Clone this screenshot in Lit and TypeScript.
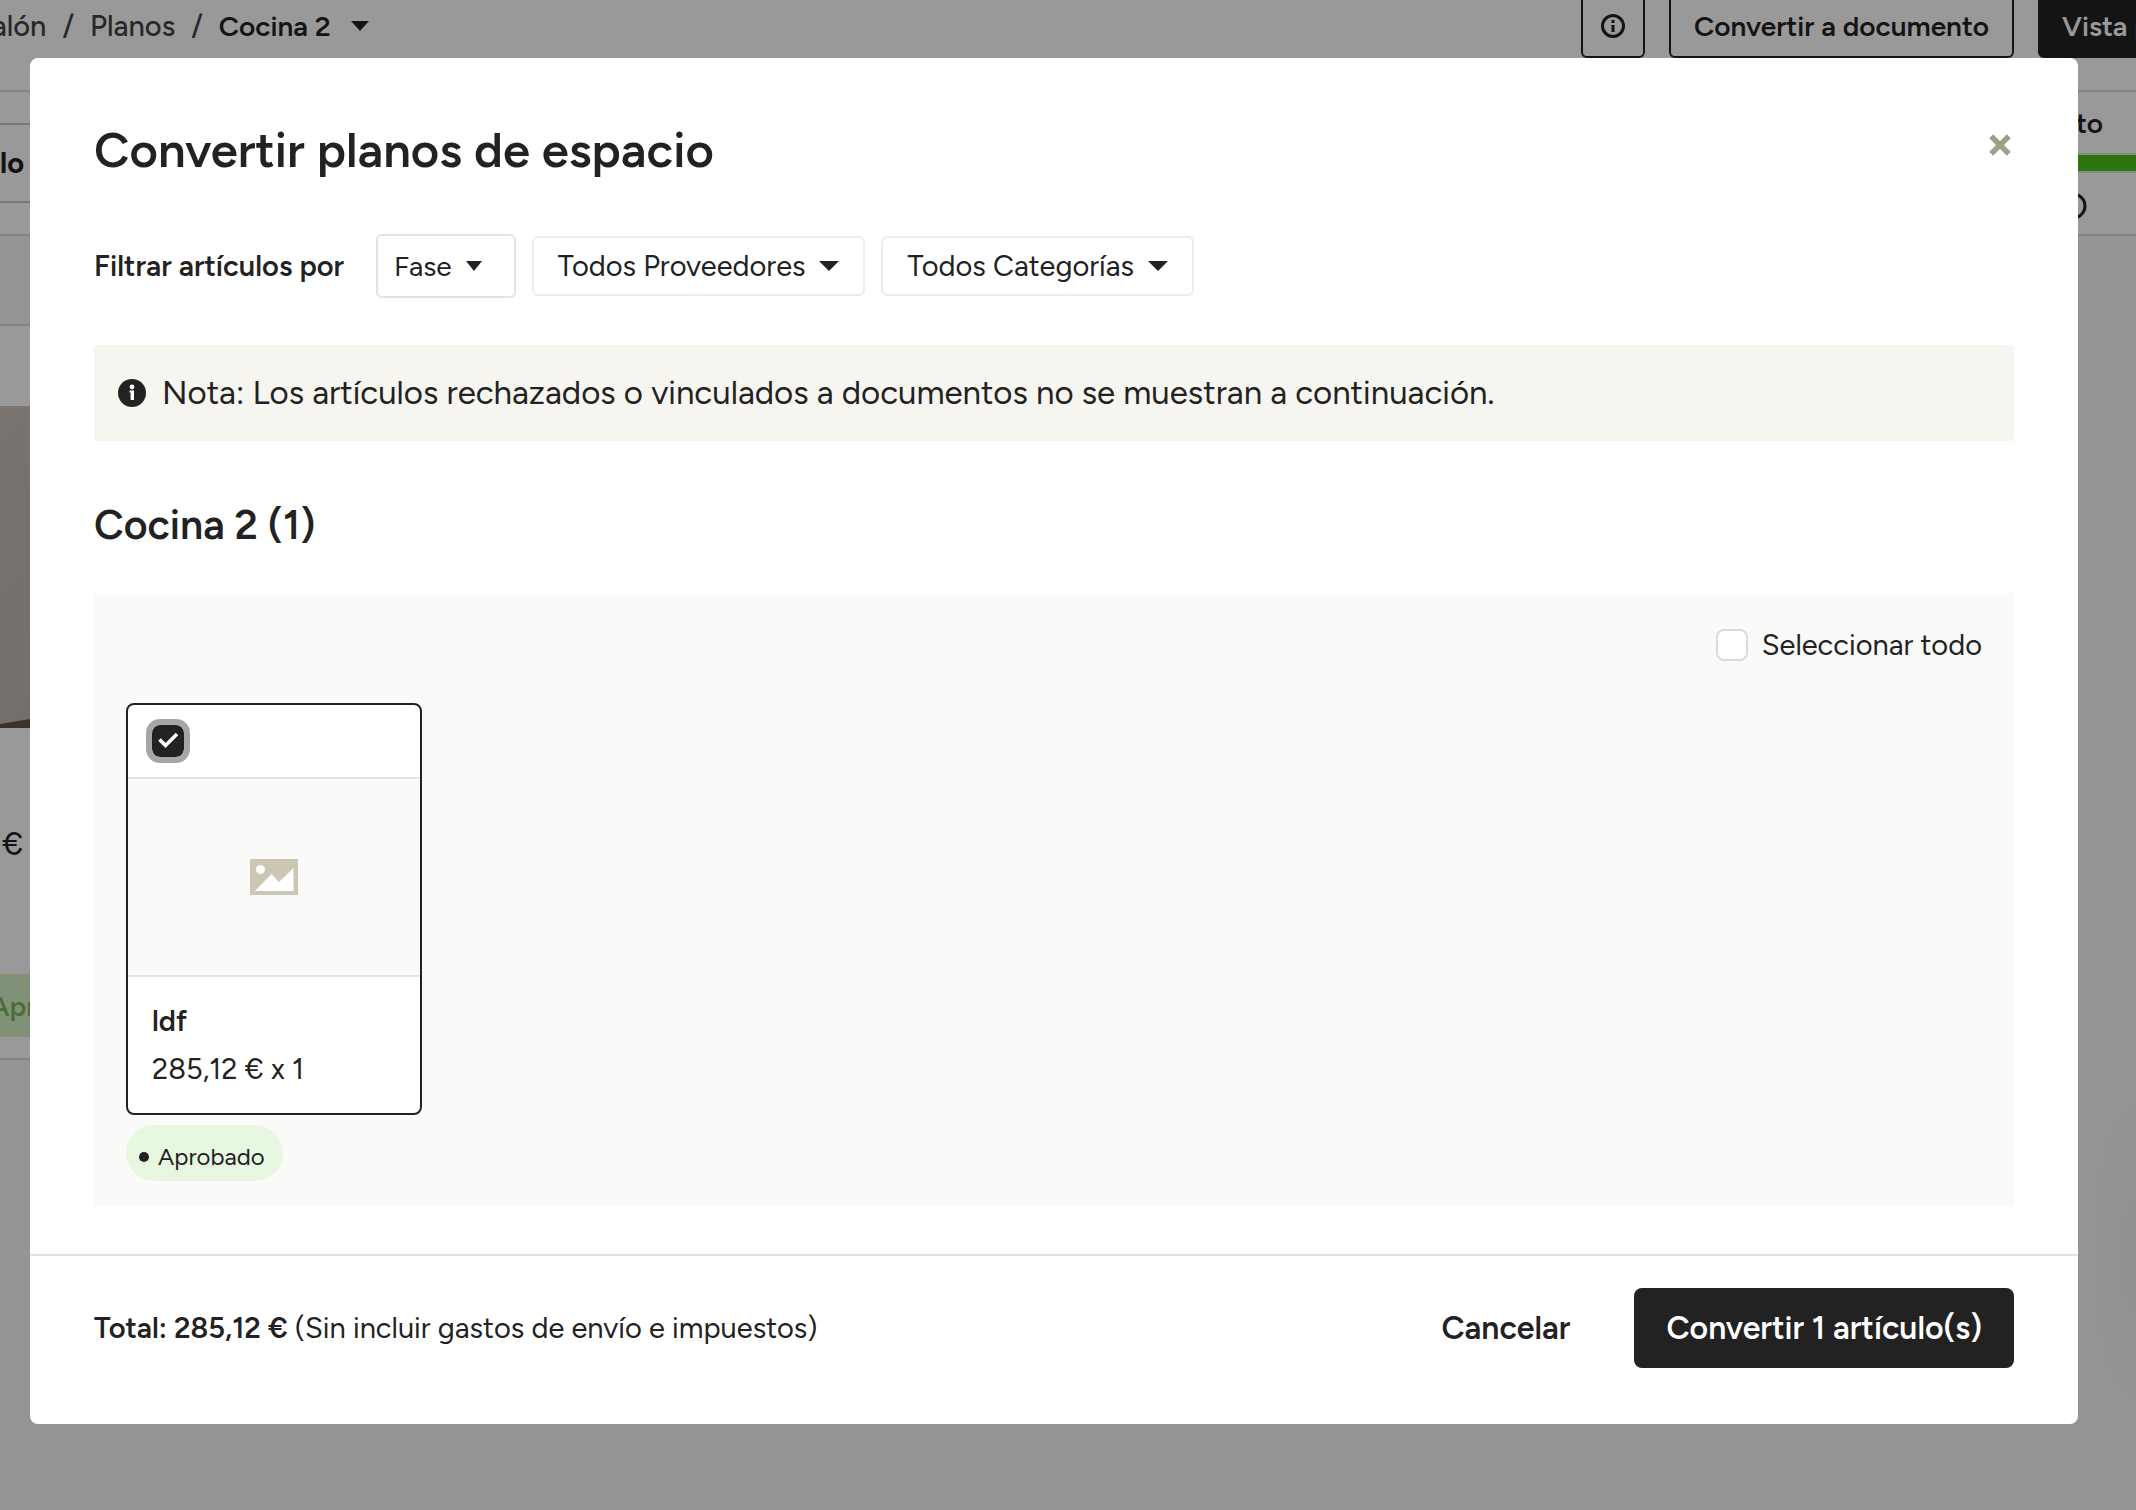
import { LitElement, html, css } from "lit";
import { customElement, state } from "lit/decorators.js";

const caret = html`<svg class="caret" viewBox="0 0 20 10" preserveAspectRatio="none" aria-hidden="true"><path d="M0 0H20L10 10Z" fill="currentColor"></path></svg>`;

@customElement("plan-page")
export class PlanPage extends LitElement {
  static styles = css`
    :host { display: block; background: radial-gradient(ellipse 60px 200px at 100% 83%, #f2f2ef, #f9f9f6); min-height: 100vh; color: #222; font-size: 28px; line-height: 36px; overflow: hidden; }
    button { font: inherit; }
    .top { background: #fff; height: 90px; border-bottom: 2px solid #ddddd8; display: flex; justify-content: space-between; align-items: flex-start; overflow: hidden; }
    .crumbs { display: flex; gap: 16px; margin: 8px 0 0 -26px; color: #444; font-size: 29px; font-weight: 500; }
    .crumbs a { color: inherit; text-decoration: none; }
    .crumbs .here { color: #222; font-size: 28px; font-weight: 600; display: flex; gap: 20px; align-items: center; background: none; border: 0; padding: 0; }
    .caret { width: 18px; height: 10px; flex: none; }
    .acts { display: flex; gap: 24px; margin: -6px -140px 0 0; flex: none; }
    .acts button { box-sizing: border-box; height: 64px; border: 2px solid #222; border-radius: 6px; background: #fff; color: #222; font-weight: 600; padding: 0 22px; display: flex; align-items: center; justify-content: center; white-space: nowrap; }
    .acts .info { width: 64px; padding: 0; }
    .acts .doc { width: 345px; }
    .acts .dark { width: 238px; background: #222; color: #fff; justify-content: flex-start; }
    .info svg { width: 26px; height: 26px; }
    .bar { background: #fff; height: 142px; border-bottom: 2px solid #ddddd8; display: flex; justify-content: space-between; }
    .state { margin-top: 31px; height: 76px; width: 60px; border: 2px solid #cbcac2; border-left: 0; font-weight: 700; font-size: 29px; display: flex; align-items: center; }
    .budget { width: 200px; margin-top: 13px; display: flex; flex-direction: column; font-weight: 600; }
    .budget .name { text-align: right; padding-right: 33px; }
    .meter { height: 16px; margin-top: 12px; background: #4bc21a; border: 2px solid #d9f2cd; border-width: 2px 0; }
    .budget svg { width: 28px; height: 28px; margin: 19px 0 0 123px; }
    .item { margin-top: 88px; width: 200px; background: #fff; border: 2px solid #ddddd8; border-left: 0; height: 732px; display: flex; flex-direction: column; }
    .photo { margin-top: 80px; height: 322px; background: linear-gradient(150deg, #cbc1bb, #bcb8b1); display: flex; align-items: flex-end; }
    .photo svg { width: 200px; height: 40px; }
    .price { margin: 98px 0 0 2px; font-size: 32px; }
    .ok { margin-top: 112px; height: 63px; background: #d8f2c8; color: #7db860; font-weight: 600; display: flex; align-items: center; }
    .ok span { margin-left: -10px; }
  `;
  render() {
    return html`
      <header class="top">
        <nav class="crumbs" aria-label="Ruta">
          <a href="#">Salón</a><span>/</span><a href="#">Planos</a><span>/</span>
          <button class="here">Cocina 2 ${caret}</button>
        </nav>
        <div class="acts">
          <button class="info" aria-label="Información">
            <svg viewBox="0 0 26 26" fill="none" stroke="currentColor" stroke-width="3"><circle cx="13" cy="13" r="10.5"></circle><path d="M13 12V19M13 7V10"></path></svg>
          </button>
          <button class="doc">Convertir a documento</button>
          <button class="dark">Vista previa</button>
        </div>
      </header>
      <section class="bar">
        <div class="state"><span>lo</span></div>
        <div class="budget">
          <span class="name">Presupuesto</span>
          <div class="meter"></div>
          <svg viewBox="0 0 28 28" fill="none" stroke="currentColor" stroke-width="3"><circle cx="14" cy="14" r="12"></circle></svg>
        </div>
      </section>
      <article class="item">
        <div class="photo">
          <svg viewBox="0 0 200 40" aria-hidden="true"><path d="M0 36L30 31L200 4V40H0Z" fill="#62564c"></path></svg>
        </div>
        <span class="price">€</span>
        <div class="ok"><span>Aprobado</span></div>
      </article>
    `;
  }
}

@customElement("convert-dialog")
export class ConvertDialog extends LitElement {
  @state() private picked = true;
  @state() private all = false;

  static styles = css`
    :host { display: block; color: #222; font-size: 29px; line-height: 36px; }
    * { box-sizing: border-box; }
    button, input { font: inherit; color: inherit; margin: 0; }
    h2, h3, p { margin: 0; }
    .dialog { background: #fff; border-radius: 8px; overflow: hidden; }
    .body { padding: 64px 64px 48px; }
    .head { display: flex; justify-content: space-between; align-items: flex-start; }
    .head h2 { font-size: 49px; line-height: 56px; font-weight: 600; }
    .close { border: 0; background: none; padding: 0; width: 28px; height: 28px; margin-top: 9px; color: #a09f8c; display: grid; place-items: center; }
    .close svg { width: 22px; height: 22px; }
    .filters { display: flex; align-items: center; gap: 16px; margin-top: 56px; }
    .filters .lead { font-weight: 600; width: 266px; white-space: nowrap; }
    .filters button { background: #fff; border: 2px solid #ececea; border-radius: 6px; height: 60px; padding: 0 24px; display: flex; align-items: center; gap: 14px; white-space: nowrap; }
    .filters .phase { height: 64px; font-size: 28px; border-color: #e4e3dd; padding: 0 32px 0 16px; }
    .caret { width: 20px; height: 10px; flex: none; }
    .phase .caret { width: 16px; }
    .note { margin-top: 47px; height: 96px; background: #f6f5f0; border-radius: 4px; display: flex; align-items: center; gap: 16px; padding: 0 24px; font-size: 33px; line-height: 40px; white-space: nowrap; }
    .note svg { width: 28px; height: 28px; flex: none; }
    .body h3 { font-size: 41px; line-height: 48px; font-weight: 600; margin-top: 60px; }
    .panel { margin-top: 44px; background: #fafaf8; padding: 32px 32px 25px; }
    .all { display: flex; justify-content: flex-end; align-items: center; gap: 14px; height: 40px; }
    .tick { appearance: none; width: 32px; height: 32px; border: 2px solid #dbdbd8; border-radius: 8px; background: #fff; flex: none; }
    .tick:checked { background: #222; border-color: #222; }
    .ring { outline: 6px solid #a6a6a2; }
    .mark { position: relative; display: grid; width: 32px; height: 32px; }
    .mark svg { position: absolute; inset: 0; pointer-events: none; }
    .card { margin-top: 38px; width: 296px; border: 2px solid #222; border-radius: 8px; background: #fff; overflow: hidden; }
    .pick { height: 74px; padding: 20px 24px; border-bottom: 2px solid #e3e3e0; }
    .thumb { height: 198px; background: #fafaf8; border-bottom: 2px solid #e3e3e0; display: grid; place-items: center; }
    .thumb svg { width: 48px; height: 36px; }
    .text { padding: 20px 24px; height: 136px; line-height: 48px; }
    .text strong { display: block; font-weight: 600; }
    .tag { display: inline-flex; align-items: center; gap: 9px; margin-top: 10px; height: 56px; padding: 8px 18px 0 13px; border-radius: 28px; background: #e8f8e0; font-size: 24px; line-height: 32px; }
    .tag i { width: 10px; height: 10px; border-radius: 50%; background: #222; }
    .foot { border-top: 2px solid #e3e3de; padding: 32px 64px 56px; display: flex; align-items: center; }
    .foot p { flex: 1; }
    .foot b { font-weight: 600; }
    .foot button { font-size: 32px; line-height: 40px; font-weight: 600; height: 80px; border: 0; border-radius: 8px; background: none; padding: 0 32px; white-space: nowrap; }
    .foot .go { background: #222; color: #fff; margin-left: 32px; }
  `;

  render() {
    return html`
      <div class="dialog" role="dialog" aria-modal="true" aria-labelledby="title">
        <div class="body">
          <div class="head">
            <h2 id="title">Convertir planos de espacio</h2>
            <button class="close" aria-label="Cerrar">
              <svg viewBox="0 0 20 20" fill="none" stroke="currentColor" stroke-width="5"><path d="M2 2L18 18M18 2L2 18"></path></svg>
            </button>
          </div>
          <div class="filters">
            <span class="lead">Filtrar artículos por</span>
            <button class="phase">Fase ${caret}</button>
            <button>Todos Proveedores ${caret}</button>
            <button>Todos Categorías ${caret}</button>
          </div>
          <p class="note">
            <svg viewBox="0 0 28 28" aria-hidden="true"><circle cx="14" cy="14" r="14" fill="#222"></circle><circle cx="14" cy="8" r="2.4" fill="#fff"></circle><path d="M11.5 11.5H16V21H12.6V13.5H11.5Z" fill="#fff"></path></svg>
            Nota: Los artículos rechazados o vinculados a documentos no se muestran a continuación.
          </p>
          <h3>Cocina 2 (1)</h3>
          <div class="panel">
            <div class="all">
              <input class="tick" type="checkbox" id="all" .checked=${this.all} @change=${() => (this.all = !this.all)} />
              <label for="all">Seleccionar todo</label>
            </div>
            <article class="card">
              <div class="pick">
                <span class="mark">
                  <input class="tick ring" type="checkbox" aria-label="ldf" .checked=${this.picked} @change=${() => (this.picked = !this.picked)} />
                  <svg viewBox="0 0 32 32" fill="none" stroke="#fff" stroke-width="3.6"><path d="M7.5 14.5L13.5 20.5L25 9"></path></svg>
                </span>
              </div>
              <div class="thumb">
                <svg viewBox="0 0 48 36" aria-hidden="true"><path d="M0 0H48V36H0Z" fill="#cbc7b4"></path><circle cx="10.5" cy="10.5" r="4.5" fill="#fff"></circle><path d="M5 32L21.5 15L29 23L43.5 9V32Z" fill="#fff"></path></svg>
              </div>
              <div class="text"><strong>ldf</strong>285,12 € x 1</div>
            </article>
            <span class="tag"><i></i>Aprobado</span>
          </div>
        </div>
        <footer class="foot">
          <p><b>Total: 285,12 €</b> (Sin incluir gastos de envío e impuestos)</p>
          <button>Cancelar</button>
          <button class="go">Convertir 1 artículo(s)</button>
        </footer>
      </div>
    `;
  }
}

@customElement("app-root")
export class AppRoot extends LitElement {
  static styles = css`
    :host { display: grid; font-family: Figtree, Lato, "Open Sans", sans-serif; min-height: 100vh; overflow: hidden; }
    plan-page, .veil { grid-area: 1 / 1; min-width: 0; }
    .veil { position: relative; background: rgba(0, 0, 0, 0.4); padding: 58px 58px 86px 30px; }
  `;
  render() {
    return html`
      <plan-page inert></plan-page>
      <div class="veil"><convert-dialog></convert-dialog></div>
    `;
  }
}
